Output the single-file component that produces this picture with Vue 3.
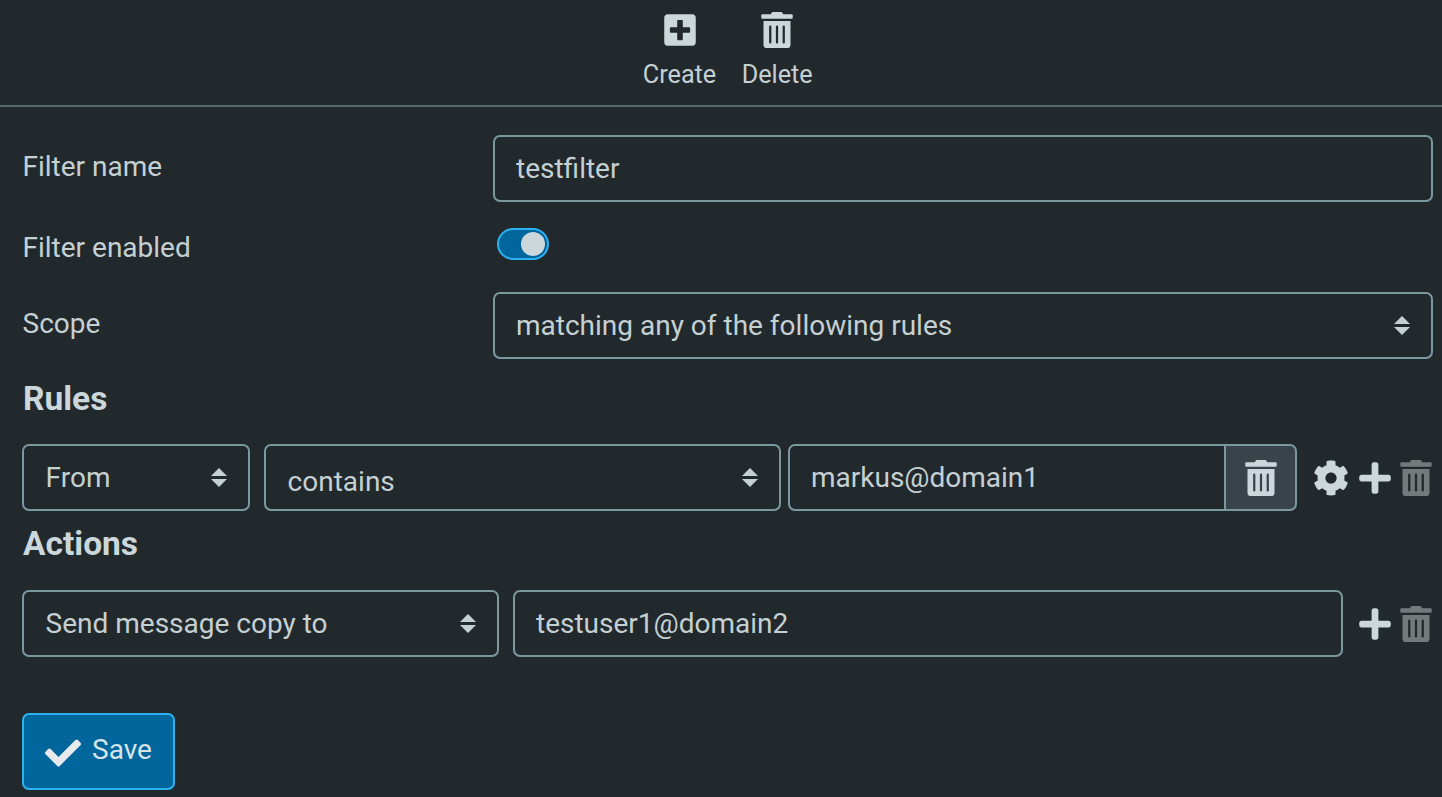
<script setup>
const trash = 'M32 464a48 48 0 0 0 48 48h288a48 48 0 0 0 48-48V128H32zm272-256a16 16 0 0 1 32 0v224a16 16 0 0 1-32 0zm-96 0a16 16 0 0 1 32 0v224a16 16 0 0 1-32 0zm-96 0a16 16 0 0 1 32 0v224a16 16 0 0 1-32 0zM432 32H312l-9.4-18.7A24 24 0 0 0 281.1 0H166.8a23.72 23.72 0 0 0-21.4 13.3L136 32H16A16 16 0 0 0 0 48v32a16 16 0 0 0 16 16h416a16 16 0 0 0 16-16V48a16 16 0 0 0-16-16z'
const plus = 'M416 208H272V64c0-17.67-14.33-32-32-32h-32c-17.67 0-32 14.33-32 32v144H32c-17.67 0-32 14.33-32 32v32c0 17.67 14.33 32 32 32h144v144c0 17.67 14.33 32 32 32h32c17.67 0 32-14.33 32-32V304h144c17.67 0 32-14.33 32-32v-32c0-17.67-14.33-32-32-32z'
const plusSquare = 'M400 32H48C21.5 32 0 53.5 0 80v352c0 26.5 21.5 48 48 48h352c26.5 0 48-21.5 48-48V80c0-26.5-21.5-48-48-48zm-32 252c0 6.6-5.4 12-12 12h-92v92c0 6.6-5.4 12-12 12h-56c-6.6 0-12-5.4-12-12v-92H92c-6.6 0-12-5.4-12-12v-56c0-6.6 5.4-12 12-12h92v-92c0-6.6 5.4-12 12-12h56c6.6 0 12 5.4 12 12v92h92c6.6 0 12 5.4 12 12v56z'
const check = 'M173.898 439.404l-166.4-166.4c-9.997-9.997-9.997-26.206 0-36.204l36.203-36.204c9.997-9.998 26.207-9.998 36.204 0L192 312.69 432.095 72.596c9.997-9.997 26.207-9.997 36.204 0l36.203 36.204c9.997 9.997 9.997 26.206 0 36.204l-294.4 294.401c-9.998 9.997-26.207 9.997-36.204-.001z'
const cog = 'M487.4 315.7l-42.6-24.6c4.3-23.2 4.3-47 0-70.2l42.6-24.6c4.9-2.8 7.1-8.6 5.5-14-11.1-35.6-30-67.8-54.7-94.6-3.8-4.1-10-5.1-14.8-2.3L380.8 110c-17.9-15.4-38.5-27.3-60.8-35.1V25.8c0-5.6-3.9-10.5-9.4-11.7-36.7-8.2-74.3-7.8-109.2 0-5.5 1.2-9.4 6.1-9.4 11.7V75c-22.2 7.9-42.8 19.8-60.8 35.1L88.7 85.5c-4.9-2.8-11-1.9-14.8 2.3-24.7 26.7-43.6 58.9-54.7 94.6-1.7 5.4.6 11.2 5.5 14L67.3 221c-4.3 23.2-4.3 47 0 70.2l-42.6 24.6c-4.9 2.8-7.1 8.6-5.5 14 11.1 35.6 30 67.8 54.7 94.6 3.8 4.1 10 5.1 14.8 2.3l42.6-24.6c17.9 15.4 38.5 27.3 60.8 35.1v49.2c0 5.6 3.9 10.5 9.4 11.7 36.7 8.2 74.3 7.8 109.2 0 5.5-1.2 9.4-6.1 9.4-11.7v-49.2c22.2-7.9 42.8-19.8 60.8-35.1l42.6 24.6c4.9 2.8 11 1.9 14.8-2.3 24.7-26.7 43.6-58.9 54.7-94.6 1.5-5.5-.7-11.3-5.6-14.1zM256 336c-44.1 0-80-35.9-80-80s35.9-80 80-80 80 35.9 80 80-35.9 80-80 80z'
</script>

<template>
  <div class="page">
    <header class="toolbar">
      <a class="tool">
        <svg class="tool-icon" viewBox="0 0 448 512"><path :d="plusSquare" /></svg>
        <span>Create</span>
      </a>
      <a class="tool">
        <svg class="tool-icon" viewBox="0 0 448 512"><path :d="trash" /></svg>
        <span>Delete</span>
      </a>
    </header>

    <main class="content">
      <div class="form-row">
        <label>Filter name</label>
        <input class="field" type="text" value="testfilter" />
      </div>
      <div class="form-row toggle-row">
        <label>Filter enabled</label>
        <div class="toggle"><span class="knob"></span></div>
      </div>
      <div class="form-row">
        <label>Scope</label>
        <div class="field select">matching any of the following rules</div>
      </div>

      <h2 class="rules-title">Rules</h2>
      <div class="rule-row">
        <div class="field select from">From</div>
        <div class="field select contains">contains</div>
        <div class="group">
          <input class="field group-input" type="text" value="markus@domain1" />
          <button class="group-btn"><svg viewBox="0 0 448 512"><path :d="trash" /></svg></button>
        </div>
        <div class="row-icons">
          <svg class="ic cog" viewBox="0 0 512 512"><path :d="cog" /></svg>
          <svg class="ic plus" viewBox="0 0 448 512"><path :d="plus" /></svg>
          <svg class="ic del" viewBox="0 0 448 512"><path :d="trash" /></svg>
        </div>
      </div>

      <h2 class="actions-title">Actions</h2>
      <div class="action-row">
        <div class="field select action">Send message copy to</div>
        <input class="field action-input" type="text" value="testuser1@domain2" />
        <div class="row-icons action-icons">
          <svg class="ic plus" viewBox="0 0 448 512"><path :d="plus" /></svg>
          <svg class="ic del" viewBox="0 0 448 512"><path :d="trash" /></svg>
        </div>
      </div>

      <button class="save">
        <svg viewBox="0 0 512 512"><path :d="check" /></svg>
        <span>Save</span>
      </button>
    </main>
  </div>
</template>

<style scoped>
.page {
  width: 1442px;
  height: 797px;
  overflow: hidden;
  background: #22292d;
  color: #c5d0d3;
  font-family: Roboto, "Liberation Sans", sans-serif;
  font-size: 28px;
  line-height: 40px;
}
.toolbar {
  box-sizing: border-box;
  height: 107px;
  border-bottom: 2px solid #566a6d;
  display: flex;
  justify-content: center;
  gap: 25.5px;
  padding-top: 12px;
  padding-left: 13.5px;
}
.tool {
  display: flex;
  flex-direction: column;
  align-items: center;
  font-size: 25.2px;
  line-height: 36px;
}
.tool-icon {
  width: 32px;
  height: 36px;
  fill: #cbd7da;
  margin-bottom: 9px;
}
.content {
  padding: 28px 9px 0 22px;
}
.form-row {
  display: grid;
  grid-template-columns: 471px 1fr;
  margin-bottom: 14px;
}
.form-row label {
  padding: 12px 0 0 0.5px;
}
.field {
  box-sizing: border-box;
  height: 67px;
  border: 2px solid #7a98a0;
  border-radius: 7px;
  background: #22292d;
  color: #c5d0d3;
  font: inherit;
  padding: 0 21px;
  outline: none;
  margin: 0;
}
input.field {
  width: 100%;
  line-height: 40px;
}
div.field {
  display: flex;
  align-items: center;
  padding-left: 21.6px;
  background-image: url("data:image/svg+xml,%3Csvg xmlns='http://www.w3.org/2000/svg' width='16' height='20'%3E%3Cpath fill='%23c5d0d3' d='M8 0l8 8H0zM0 11h16l-8 8z'/%3E%3C/svg%3E");
  background-repeat: no-repeat;
  background-position: right 21px center;
}
.form-row div.field {
  padding-left: 21px;
}
.toggle-row {
  margin-bottom: 25px;
  height: 51px;
}
.toggle {
  box-sizing: border-box;
  width: 52px;
  height: 32px;
  margin: 12px 0 0 4px;
  border: 2px solid #2eb1f0;
  border-radius: 16px;
  background: #00669c;
  display: flex;
  justify-content: flex-end;
  align-items: center;
  padding-right: 2px;
}
.knob {
  width: 24px;
  height: 24px;
  border-radius: 50%;
  background: #cbd7da;
}
h2 {
  margin: 0;
  padding-left: 1px;
  font-size: 33.5px;
  line-height: 40px;
  font-weight: 700;
  color: #cbd7da;
}
.rules-title {
  margin-top: 20px;
}
.rule-row {
  display: flex;
  align-items: center;
  margin-top: 25px;
}
.from {
  width: 228px;
  flex: none;
}
.contains {
  width: 517px;
  flex: none;
  margin-left: 14px;
  padding-top: 8px;
}
.group {
  display: flex;
  margin-left: 7px;
  width: 509px;
  flex: none;
}
.group-input {
  flex: 1;
  min-width: 0;
  border-radius: 7px 0 0 7px;
}
.group-btn {
  box-sizing: border-box;
  width: 73px;
  height: 67px;
  flex: none;
  margin-left: -2px;
  padding: 0;
  border: 2px solid #7a98a0;
  border-radius: 0 7px 7px 0;
  background: #384449;
  display: flex;
  align-items: center;
  justify-content: center;
}
.group-btn svg {
  width: 32px;
  height: 36px;
  fill: #cbd7da;
}
.row-icons {
  display: flex;
  align-items: center;
  margin-left: 16px;
}
.ic {
  flex: none;
  height: 36px;
}
.cog {
  width: 36px;
  fill: #cbd7da;
}
.plus {
  width: 32px;
  margin-left: 10px;
  fill: #cbd7da;
}
.del {
  width: 32px;
  margin-left: 9px;
  fill: #74797b;
}
.actions-title {
  margin-top: 13px;
}
.action-row {
  display: flex;
  align-items: center;
  margin-top: 26px;
}
.action {
  width: 477px;
  flex: none;
}
.action-input {
  width: 830px !important;
  flex: none;
  margin-left: 14px;
}
.action-icons {
  margin-left: 6px;
}
.save {
  box-sizing: border-box;
  display: flex;
  align-items: center;
  width: 153px;
  height: 77px;
  margin-top: 56px;
  padding: 0 0 0 21px;
  border: 2px solid #2eb1f0;
  border-radius: 7px;
  background: #00669c;
  color: #d6e4ea;
  font: inherit;
}
.save svg {
  width: 36px;
  height: 36px;
  fill: #e6eaec;
  margin: 2px 11px 0 0;
}
.save span {
  padding-bottom: 4px;
}
</style>
